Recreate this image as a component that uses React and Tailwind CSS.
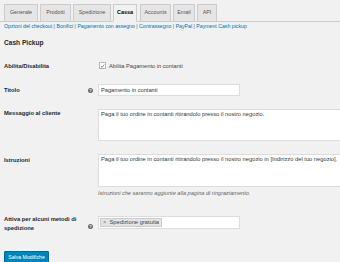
import { useState } from 'react'

const tabs = [
  { label: 'Generale', w: 'w-[34px]' },
  { label: 'Prodotti', w: 'w-[31px]' },
  { label: 'Spedizione', w: 'w-[38px]' },
  { label: 'Cassa', w: 'w-[24px]', active: true },
  { label: 'Accounts', w: 'w-[31px]' },
  { label: 'Email', w: 'w-[22px]' },
  { label: 'API', w: 'w-[20px]' },
]

const sections = ['Opzioni del checkout', 'Bonifici', 'Pagamento con assegno', 'Contrassegno', 'PayPal', 'Payment Cash pickup']

function HelpTip() {
  return (
    <span className="flex items-center justify-center w-[5px] h-[5px] rounded-full bg-[#6b6b6b] text-white text-[4px] leading-[5px] font-bold">?</span>
  )
}

export default function App() {
  const [enabled, setEnabled] = useState(true)
  const [title, setTitle] = useState('Pagamento in contanti')
  const [message, setMessage] = useState('Paga il tuo ordine in contanti ritirandolo presso il nostro negozio.')
  const [instructions, setInstructions] = useState('Paga il tuo ordine in contanti ritirandolo presso il nostro negozio in [Indirizzo del tuo negozio].')

  return (
    <div className="w-[340px] h-[262px] overflow-hidden bg-[#f1f1f1] text-[#444] font-['Liberation_Sans',Arial,sans-serif]">
      {/* Tabs */}
      <div className="flex items-start h-[22px] pt-[4px] pl-[4px] gap-[2px] border-b border-[#ccc]">
        {tabs.map((t) => (
          <div
            key={t.label}
            className={`${t.w} h-[18px] border border-[#ccc] text-center text-[5.4px] leading-[15px] ${
              t.active ? 'bg-[#f1f1f1] border-b-[#f1f1f1] text-black font-semibold' : 'bg-[#e5e5e5] text-[#555]'
            } ${t.label === 'Accounts' ? 'ml-[1px]' : ''}`}
          >
            {t.label}
          </div>
        ))}
      </div>

      {/* Section links */}
      <div className="pl-[4px] h-[8px] text-[5.2px] leading-[8px] text-[#0073aa] whitespace-nowrap">
        {sections.map((s, i) => (
          <span key={s}>
            {i > 0 && <span className="text-[#666]"> |</span>}
            {i > 0 && ' '}
            <span>{s}</span>
          </span>
        ))}
      </div>

      <h2 className="mt-[9px] pl-[4px] text-[6.6px] leading-[8px] font-semibold text-[#23282d]">Cash Pickup</h2>

      {/* Abilita */}
      <div className="flex mt-[13px] h-[10px]">
        <div className="w-[98px] shrink-0 pl-[4px] pt-[1px] text-[5.8px] leading-[10px] font-semibold text-[#23282d]">Abilita/Disabilita</div>
        <label className="flex items-start">
          <span
            onClick={() => setEnabled(!enabled)}
            className="mt-[2px] ml-[1px] w-[7px] h-[7px] border border-[#b4b9be] bg-white flex items-center justify-center"
          >
            {enabled && (
              <svg width="6" height="6" viewBox="0 0 10 10">
                <path d="M1.5 5.2 L4 7.6 L8.6 2.2" fill="none" stroke="#555" strokeWidth="1.3" />
              </svg>
            )}
          </span>
          <span className="ml-[3px] text-[5.7px] leading-[10px] pt-[1px] text-[#444]">Abilita Pagamento in contanti</span>
        </label>
      </div>

      {/* Titolo */}
      <div className="flex mt-[14px] h-[12px]">
        <div className="w-[98px] shrink-0 pl-[4px] pr-[5px] flex items-center justify-between">
          <span className="text-[5.8px] leading-[12px] font-semibold text-[#23282d]">Titolo</span>
          <HelpTip />
        </div>
        <input
          value={title}
          onChange={(e) => setTitle(e.target.value)}
          className="w-[142px] h-[12px] border border-[#ddd] bg-white px-[2px] text-[5.7px] text-[#32373c] outline-none"
        />
      </div>

      {/* Messaggio */}
      <div className="flex mt-[13px]">
        <div className="w-[98px] shrink-0 pl-[4px] text-[5.8px] leading-[8px] font-semibold text-[#23282d]">Messaggio al cliente</div>
        <textarea
          value={message}
          onChange={(e) => setMessage(e.target.value)}
          className="w-[260px] h-[32px] shrink-0 border border-[#ddd] bg-white pl-[2px] pt-[1px] text-[5.75px] leading-[7px] text-[#32373c] outline-none resize-none"
        />
      </div>

      {/* Istruzioni */}
      <div className="flex mt-[13px]">
        <div className="w-[98px] shrink-0 pl-[4px] pt-[2px] text-[5.8px] leading-[8px] font-semibold text-[#23282d]">Istruzioni</div>
        <div>
          <textarea
            value={instructions}
            onChange={(e) => setInstructions(e.target.value)}
            className="block w-[260px] h-[33px] border border-[#ddd] bg-white pl-[2px] pt-[1px] text-[5.75px] leading-[7px] text-[#32373c] outline-none resize-none"
          />
          <p className="mt-[2px] text-[5.6px] leading-[8px] italic text-[#666] whitespace-nowrap">
            Istruzioni che saranno aggiunte alla pagina di ringraziamento.
          </p>
        </div>
      </div>

      {/* Metodi di spedizione */}
      <div className="flex mt-[19px]">
        <div className="w-[98px] shrink-0 pl-[4px] pr-[5px] flex justify-between items-start">
          <span className="w-[82px] -mt-[1px] text-[5.8px] leading-[9px] font-semibold text-[#23282d]">
            Attiva per alcuni metodi di spedizione
          </span>
          <span className="mt-[8px]">
            <HelpTip />
          </span>
        </div>
        <div className="w-[142px] h-[13px] border border-[#ddd] bg-white flex items-center pl-[1px]">
          <span className="flex items-center h-[9px] px-[2px] bg-[#e4e4e4] border border-[#ccc] text-[5.8px] leading-[9px] text-[#444]">
            <span className="text-[#888] mr-[3px]">×</span>
            Spedizione gratuita
          </span>
        </div>
      </div>

      <button className="mt-[18px] ml-[4px] w-[45px] h-[12px] rounded-[1px] bg-[#0085ba] border border-[#006799] text-white text-[5.2px] leading-[10px] shadow-[0_1px_0_#006799]">
        Salva Modifiche
      </button>
    </div>
  )
}
